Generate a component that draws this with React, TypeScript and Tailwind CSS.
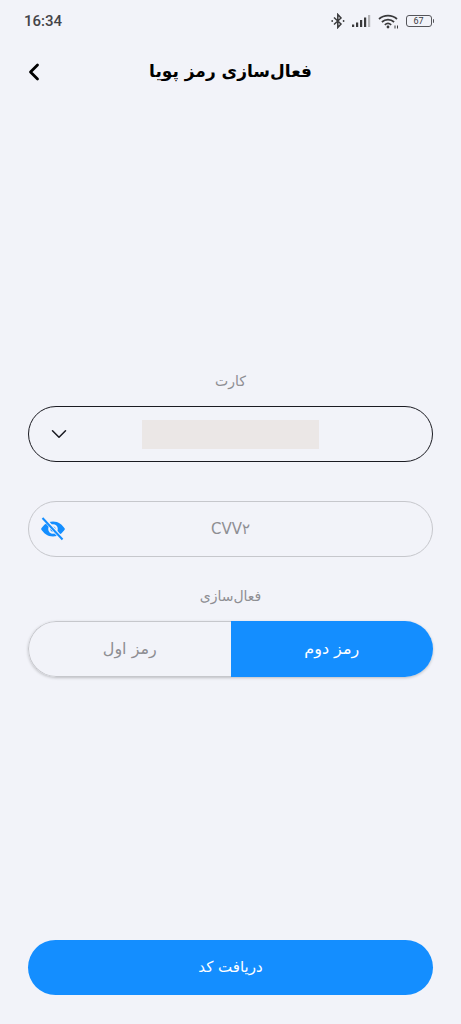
import { ChevronDown, ChevronLeft } from 'lucide-react';

const fa = "font-['DejaVu_Sans',sans-serif]";

function StatusIcons() {
  return (
    <div className="flex items-center gap-[5px] text-[#3a3a3c]">
      {/* bluetooth */}
      <svg width="16" height="16" viewBox="0 0 16 16" fill="none" stroke="currentColor" strokeWidth="1.5">
        <path d="M4 4.5 L11 11 L7.8 14.5 V1.5 L11 5 L4 11.5" />
        <circle cx="2.2" cy="8" r="0.9" fill="currentColor" stroke="none" />
        <circle cx="13.6" cy="8" r="0.9" fill="currentColor" stroke="none" />
      </svg>
      {/* signal */}
      <svg width="20" height="12" viewBox="0 0 20 12" fill="currentColor" className="ml-[1px]">
        <rect x="0" y="9.5" width="2.2" height="2.5" />
        <rect x="4" y="7.5" width="2.2" height="4.5" />
        <rect x="8" y="5" width="2.2" height="7" />
        <rect x="12" y="2.5" width="2.2" height="9.5" />
        <rect x="16" y="0" width="2.2" height="12" fill="#b5b5b8" />
      </svg>
      {/* wifi */}
      <svg width="21" height="15" viewBox="0 0 21 15" fill="none" stroke="currentColor" strokeWidth="1.7" className="ml-[1px]">
        <path d="M1 5 C6 0.4 14 0.4 19 5" />
        <path d="M3.9 8 C7.4 4.8 12.6 4.8 16.1 8" />
        <path d="M6.8 10.8 C8.7 9.2 11.3 9.2 13.2 10.8" />
        <circle cx="10" cy="13" r="1.4" fill="currentColor" stroke="none" />
        <path d="M17 14.5 V11.5 M19.5 14.5 V11.5" strokeWidth="1" />
      </svg>
      {/* battery */}
      <div className="ml-[2px] flex items-center gap-[1px]">
        <div className="flex h-[12px] w-[26px] items-center justify-center rounded-[3px] border border-[#55555a] font-['Roboto',sans-serif] text-[9px] leading-none">
          67
        </div>
        <div className="h-[4px] w-[1.5px] rounded-r bg-[#55555a]" />
      </div>
    </div>
  );
}

function EyeOff() {
  return (
    <svg width="26" height="24" viewBox="0 0 26 24">
      <path fillRule="evenodd" fill="#148eff" d="M13 4.5 C18.5 4.5 22.6 8 25 12 C22.6 16 18.5 19.5 13 19.5 C7.5 19.5 3.4 16 1 12 C3.4 8 7.5 4.5 13 4.5 Z M13 7.2 A4.8 4.8 0 1 0 13 16.8 A4.8 4.8 0 1 0 13 7.2 Z" />
      <circle cx="13" cy="12" r="2.6" fill="#148eff" />
      <path d="M3.5 1 L22 22" stroke="#f2f3f9" strokeWidth="4" />
      <path d="M2.5 1 L22.5 22.5" stroke="#148eff" strokeWidth="2" />
    </svg>
  );
}

export default function App() {
  return (
    <div dir="rtl" className={`flex h-[1024px] w-full flex-col items-center bg-[#f2f3f9] ${fa}`}>
      {/* Status bar */}
      <div dir="ltr" className="flex h-[42px] w-full items-center justify-between pl-[24px] pr-[27px]">
        <span className="font-['Roboto',sans-serif] text-[15px] font-medium text-[#444448]">16:34</span>
        <StatusIcons />
      </div>

      {/* Header */}
      <div dir="ltr" className="relative flex h-[60px] w-full items-center justify-center">
        <ChevronLeft className="absolute left-[20px] top-[16px] h-[28px] w-[28px] text-black" strokeWidth={2.4} />
        <h1 dir="rtl" className="text-[17px] font-bold text-black">فعال‌سازی رمز پویا</h1>
      </div>

      {/* Form */}
      <div className="mt-[268px] w-full px-[28px]">
        <p className="text-center text-[14px] leading-[22px] text-[#8e8e93]">کارت</p>

        <div dir="ltr" className="relative mt-[14px] flex h-[56px] items-center justify-center rounded-full border-[1.5px] border-[#1b1b22]">
          <ChevronDown className="absolute left-[17px] h-[26px] w-[26px] text-[#1b1b22]" strokeWidth={1.4} />
          <div className="h-[29px] w-[177px] bg-[#ebe7e6]" />
        </div>

        <div dir="ltr" className="relative mt-[39px] flex h-[56px] items-center justify-center rounded-full border-[1.5px] border-[#c6c7cc]">
          <div className="absolute left-[11px]">
            <EyeOff />
          </div>
          <span className="text-[15px] text-[#8e8e93]">CVV۲</span>
        </div>

        <p className="mt-[28px] text-center text-[14px] leading-[22px] text-[#8e8e93]">فعال‌سازی</p>

        <div className="mt-[14px] flex h-[56px] overflow-hidden rounded-full shadow-[0_1px_3px_rgba(0,0,0,0.22)]">
          <div className="flex w-1/2 items-center justify-center bg-[#148eff] text-[16px] text-white">رمز دوم</div>
          <div className="flex w-1/2 items-center justify-center rounded-l-full border-[1px] border-r-0 border-[#c6c7cc] bg-[#f2f3f9] text-[16px] text-[#8e8e93]">رمز اول</div>
        </div>
      </div>

      {/* Submit */}
      <div className="mt-auto mb-[29px] w-full px-[28px]">
        <button className="flex h-[55px] w-full items-center justify-center rounded-full bg-[#148eff] text-[15px] text-white">
          دریافت کد
        </button>
      </div>
    </div>
  );
}
